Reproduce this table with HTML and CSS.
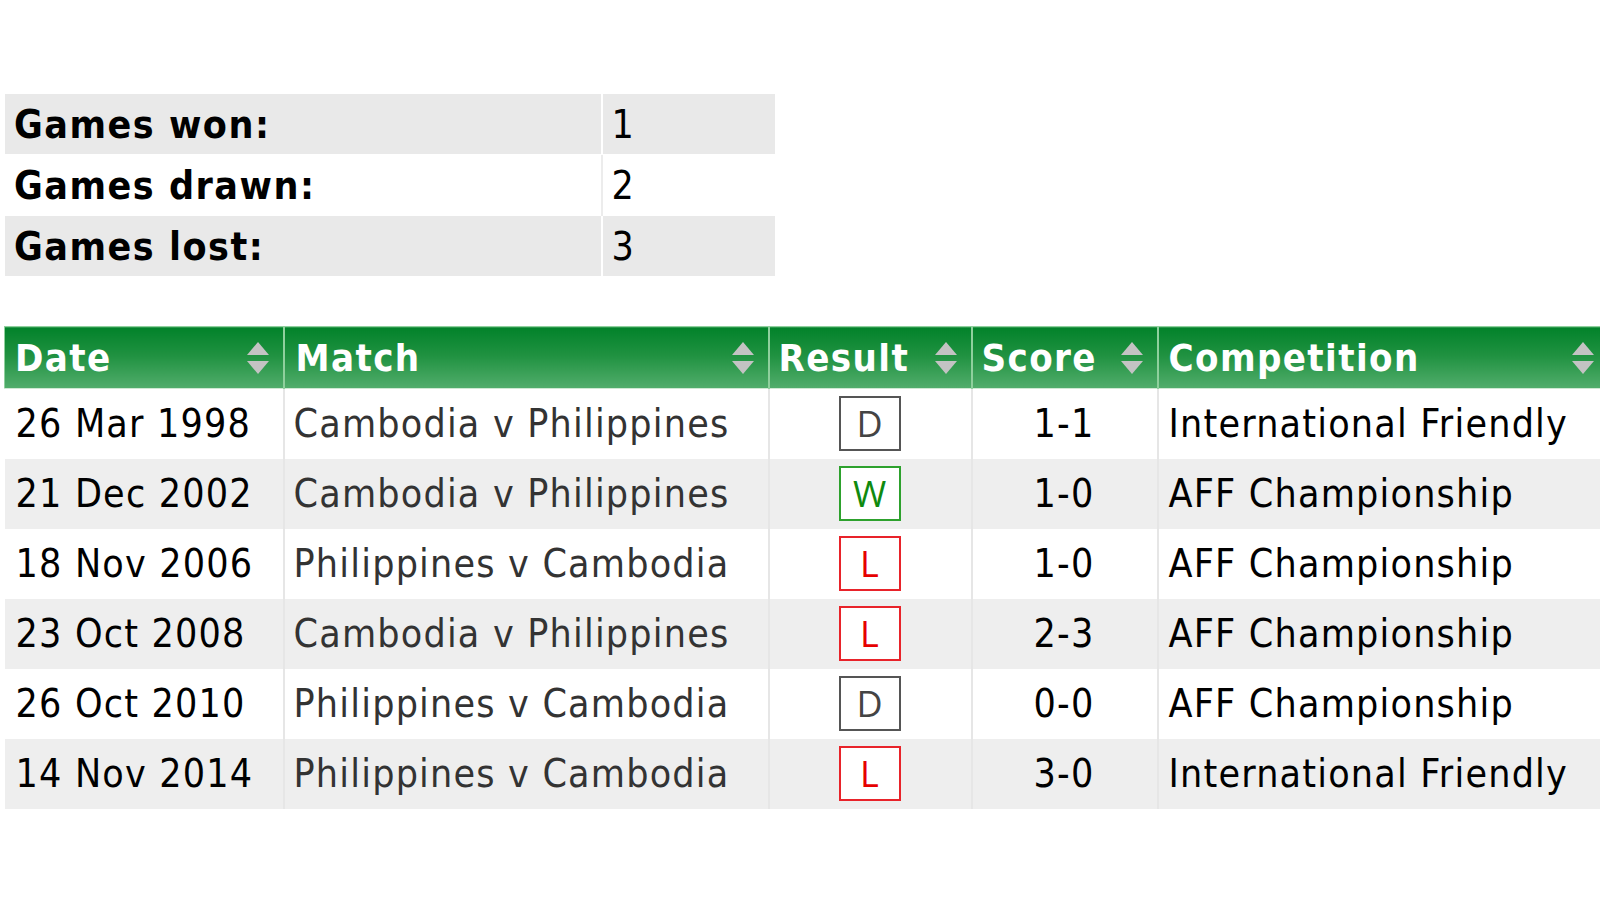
FILE: index.html
```html
<!DOCTYPE html>
<html lang="en">
<head>
<meta charset="utf-8">
<title>Cambodia v Philippines head to head</title>
<link rel="stylesheet" href="styles.css">
</head>
<body>
<div class="page">
  <table class="summary">
    <tbody>
      <tr class="alt"><th>Games won:</th><td>1</td></tr>
      <tr><th>Games drawn:</th><td>2</td></tr>
      <tr class="alt"><th>Games lost:</th><td>3</td></tr>
    </tbody>
  </table>

  <table class="results">
    <colgroup>
      <col class="c-date"><col class="c-match"><col class="c-result"><col class="c-score"><col class="c-comp">
    </colgroup>
    <thead>
      <tr>
        <th><span>Date</span><i class="sort"></i></th>
        <th><span>Match</span><i class="sort"></i></th>
        <th><span>Result</span><i class="sort"></i></th>
        <th><span>Score</span><i class="sort"></i></th>
        <th><span>Competition</span><i class="sort"></i></th>
      </tr>
    </thead>
    <tbody>
      <tr>
        <td class="date">26 Mar 1998</td><td class="match">Cambodia v Philippines</td>
        <td class="res"><span class="badge d">D</span></td><td class="score">1-1</td><td class="comp">International Friendly</td>
      </tr>
      <tr class="alt">
        <td class="date">21 Dec 2002</td><td class="match">Cambodia v Philippines</td>
        <td class="res"><span class="badge w">W</span></td><td class="score">1-0</td><td class="comp">AFF Championship</td>
      </tr>
      <tr>
        <td class="date">18 Nov 2006</td><td class="match">Philippines v Cambodia</td>
        <td class="res"><span class="badge l">L</span></td><td class="score">1-0</td><td class="comp">AFF Championship</td>
      </tr>
      <tr class="alt">
        <td class="date">23 Oct 2008</td><td class="match">Cambodia v Philippines</td>
        <td class="res"><span class="badge l">L</span></td><td class="score">2-3</td><td class="comp">AFF Championship</td>
      </tr>
      <tr>
        <td class="date">26 Oct 2010</td><td class="match">Philippines v Cambodia</td>
        <td class="res"><span class="badge d">D</span></td><td class="score">0-0</td><td class="comp">AFF Championship</td>
      </tr>
      <tr class="alt">
        <td class="date">14 Nov 2014</td><td class="match">Philippines v Cambodia</td>
        <td class="res"><span class="badge l">L</span></td><td class="score">3-0</td><td class="comp">International Friendly</td>
      </tr>
    </tbody>
  </table>
</div>
</body>
</html>
```

FILE: styles.css
```css
html, body {
  margin: 0;
  padding: 0;
  background: #ffffff;
  overflow: hidden;
}

body {
  font-family: "DejaVu Sans Condensed", "DejaVu Sans", sans-serif;
  font-stretch: condensed;
  color: #000;
}

.page {
  padding: 93px 0 0 4px;
  width: 1620px;
}

/* summary table */
.summary {
  border-collapse: collapse;
  width: 772px;
  table-layout: fixed;
}
.summary th, .summary td {
  height: 61px;
  padding: 0 9px;
  font-size: 39px;
  text-align: left;
  vertical-align: middle;
  border: 1px solid #fff;
  box-sizing: border-box;
}
.summary th {
  width: 597px;
  font-weight: bold;
  letter-spacing: 1.5px;
}
.summary td {
  font-weight: normal;
  border-left: 2px solid #fff;
}
.summary tr.alt th, .summary tr.alt td {
  background: #e9e9e9;
}
.summary tr:not(.alt) td {
  border-left: 2px solid #ececec;
}

/* results table */
.results {
  margin-top: 49px;
  border-collapse: collapse;
  table-layout: fixed;
  width: 1603px;
}
.c-date { width: 279px; }
.c-match { width: 485px; }
.c-result { width: 203px; }
.c-score { width: 186px; }
.c-comp { width: 450px; }

.results thead th {
  position: relative;
  height: 62px;
  padding: 0 11px;
  text-align: left;
  vertical-align: middle;
  font-size: 38px;
  font-weight: bold;
  letter-spacing: 1.4px;
  color: #fff;
  background: linear-gradient(#02822a 0%, #1f9140 45%, #52ad6c 100%);
  border-left: 2px solid #8fd09d;
  border-top: 1px solid #8fd09d;
  border-bottom: 1px solid #cfe9d3;
  box-sizing: border-box;
  white-space: nowrap;
}
.results thead th:first-child {
  border-left: 1px solid #8fd09d;
  padding-left: 10px;
}
.results thead th:nth-child(3) { padding-left: 9px; }
.results thead th:nth-child(4) { padding-left: 9px; }
.results thead th:nth-child(5) { padding-left: 10px; }

.sort {
  position: absolute;
  right: 14px;
  top: 50%;
  width: 22px;
  height: 32px;
  margin-top: -16px;
}
.sort::before, .sort::after {
  content: "";
  position: absolute;
  left: 0;
  width: 0;
  height: 0;
  border-left: 11px solid transparent;
  border-right: 11px solid transparent;
}
.sort::before {
  top: 0;
  border-bottom: 13px solid #c3c3c3;
}
.sort::after {
  bottom: 0;
  border-top: 13px solid #c3c3c3;
}

.results tbody td {
  height: 70px;
  padding: 0 10px 0 9px;
  font-size: 39px;
  letter-spacing: 1.2px;
  vertical-align: middle;
  border-left: 2px solid #e6e6e6;
  box-sizing: border-box;
  white-space: nowrap;
}
.results tbody td:first-child {
  border-left: 0;
}
.results tbody tr.alt td {
  background: #eeeeee;
}
.results td.date { color: #000; padding-left: 11px; }
.results td.match { color: #333; }
.results td.score { text-align: center; color: #000; }
.results td.comp { color: #000; padding-left: 10px; }
.results td.res { text-align: center; }

.badge {
  display: inline-flex;
  align-items: center;
  justify-content: center;
  width: 62px;
  height: 55px;
  box-sizing: border-box;
  border: 2px solid #555;
  background: #fff;
  font-family: "Open Sans", "DejaVu Sans", sans-serif;
  font-stretch: normal;
  font-size: 36px;
  letter-spacing: 0;
  line-height: 1;
  vertical-align: middle;
}
.badge.d { border-color: #555555; color: #444444; }
.badge.w { border-color: #2da12d; color: #0f8a0f; }
.badge.l { border-color: #e8232a; color: #e60000; }
```
